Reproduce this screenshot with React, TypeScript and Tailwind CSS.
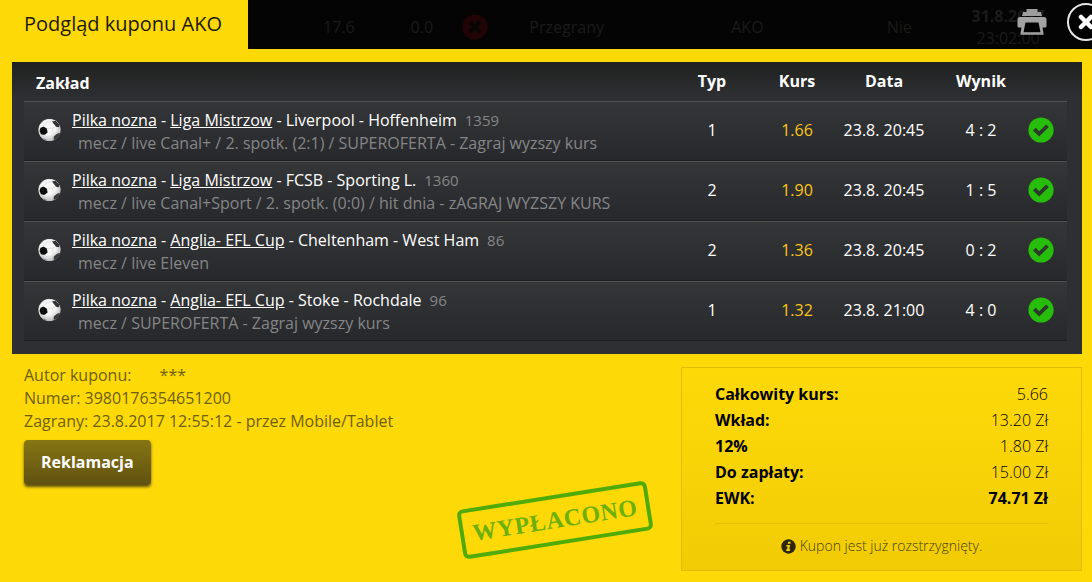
import { useId } from "react";

type Bet = {
  sport: string;
  league: string;
  match: string;
  code: string;
  note: string;
  pick: string;
  odds: string;
  date: string;
  score: string;
};

const BETS: Bet[] = [
  {
    sport: "Pilka nozna",
    league: "Liga Mistrzow",
    match: "Liverpool - Hoffenheim",
    code: "1359",
    note: "mecz / live Canal+ / 2. spotk. (2:1) / SUPEROFERTA - Zagraj wyzszy kurs",
    pick: "1",
    odds: "1.66",
    date: "23.8. 20:45",
    score: "4 : 2",
  },
  {
    sport: "Pilka nozna",
    league: "Liga Mistrzow",
    match: "FCSB - Sporting L.",
    code: "1360",
    note: "mecz / live Canal+Sport / 2. spotk. (0:0) / hit dnia - zAGRAJ WYZSZY KURS",
    pick: "2",
    odds: "1.90",
    date: "23.8. 20:45",
    score: "1 : 5",
  },
  {
    sport: "Pilka nozna",
    league: "Anglia- EFL Cup",
    match: "Cheltenham - West Ham",
    code: "86",
    note: "mecz / live Eleven",
    pick: "2",
    odds: "1.36",
    date: "23.8. 20:45",
    score: "0 : 2",
  },
  {
    sport: "Pilka nozna",
    league: "Anglia- EFL Cup",
    match: "Stoke - Rochdale",
    code: "96",
    note: "mecz / SUPEROFERTA - Zagraj wyzszy kurs",
    pick: "1",
    odds: "1.32",
    date: "23.8. 21:00",
    score: "4 : 0",
  },
];

const SUMMARY = [
  { label: "Całkowity kurs:", value: "5.66" },
  { label: "Wkład:", value: "13.20 Zł" },
  { label: "12%", value: "1.80 Zł" },
  { label: "Do zapłaty:", value: "15.00 Zł" },
  { label: "EWK:", value: "74.71 Zł", strong: true },
];

function FootballIcon() {
  const id = useId();
  return (
    <svg viewBox="0 0 24 24" className="ml-[13px] h-6 w-6" aria-hidden="true">
      <defs>
        <radialGradient id={id} cx="45%" cy="40%" r="60%">
          <stop offset="0.5" stopColor="#f7f7f7" />
          <stop offset="1" stopColor="#b9b9b9" />
        </radialGradient>
        <clipPath id={`${id}-c`}>
          <circle cx="12.5" cy="12" r="11.3" />
        </clipPath>
      </defs>
      <g clipPath={`url(#${id}-c)`}>
        <circle cx="12.5" cy="12" r="11.3" fill={`url(#${id})`} />
        <path d="M3.4 10 6.400 8.600 9.800 10.600 10.600 14.400 7.400 17 4 16.200 2.600 13z" fill="#0c0c0c" />
        <path d="M15 3.600 18.400 2.800 22.400 6.400 22 9.200 19 8.800z" fill="#333" />
        <path d="M16.600 18.600 20.400 15.600 24 15 22 20 16.800 22z" fill="#3a3a3a" />
        <path d="M0 7 4 2.400 6.400 2 3.200 6z" fill="#6a6a6a" />
        <path d="M6.400 20.400 9.800 21.800 10 24 5 22.600z" fill="#888" />
        <path
          d="M9.800 10.600 15.400 10 19 8.800M15.400 10l1.200 8.600M7.400 17l3.200 3 6-1.400M6.400 8.600 8.800 4.800l6.200-1.200"
          stroke="#dcdcdc"
          strokeWidth="0.7"
          fill="none"
        />
      </g>
    </svg>
  );
}

function WonIcon() {
  return (
    <svg viewBox="0 0 26 26" className="mx-auto h-[26px] w-[26px]" role="img" aria-label="Wygrany">
      <circle cx="13" cy="13" r="12.6" fill="#26bd0b" />
      <path d="M5 13.4 7.700 10.800 11.200 14.200 18.200 7.400 20.800 10 11.200 19.400z" fill="#2d382c" />
    </svg>
  );
}

function LostIcon() {
  return (
    <svg viewBox="0 0 26 26" className="h-[26px] w-[26px]" aria-hidden="true">
      <circle cx="13" cy="13" r="12.6" fill="#210405" />
      <path d="M8 8l10 10M18 8 8 18" stroke="#090505" strokeWidth="4" />
    </svg>
  );
}

function PrinterIcon() {
  return (
    <svg viewBox="0 0 30 26" className="h-[26px] w-[30px]" aria-hidden="true">
      <path d="M9.500 0h11v3H24l1 4H5l1-4h3.500z" fill="#9c9c9c" />
      <path
        fillRule="evenodd"
        fill="#a3a3a3"
        d="M3 8h24q2.500 0 2.500 2.500V17q0 1.500-1.500 1.500h-2.500l1.200 7.200H3.300l1.200-7.200H2Q.5 18.500.5 17v-6.500Q.5 8 3 8zM8.500 13.500l-2 9.700h17l-2-9.700z"
      />
    </svg>
  );
}

function CloseIcon() {
  return (
    <svg viewBox="0 0 40 40" className="h-10 w-10" aria-hidden="true">
      <circle cx="20" cy="20" r="18" fill="#000" stroke="#e6e6e6" strokeWidth="2" />
      <path d="M15 15l10 10M25 15 15 25" stroke="#fff" strokeWidth="4.500" strokeLinecap="round" />
    </svg>
  );
}

function InfoIcon() {
  return (
    <svg viewBox="0 0 16 16" className="h-[15px] w-[15px]" aria-hidden="true">
      <circle cx="8" cy="8" r="7.700" fill="#2b260c" />
      <path
        d="M7.600 2.800h2.600v2.200H7.200zM5.800 6.400h4L8.800 11h1l-.3 1.700H5.400L5.700 11h.8l.6-2.900H5.500z"
        fill="#f4d008"
      />
    </svg>
  );
}

// Row of the coupon list, dimmed behind the open preview
function DimmedRow() {
  return (
    <div
      aria-hidden="true"
      className="grid h-full grid-cols-[86fr_80fr_26px_158fr_204fr_100fr_118fr] items-center pt-[5px] pr-[25px] pl-12 text-center leading-[22px] text-[#1b1b1b]"
    >
      <span>17.6</span>
      <span>0.0</span>
      <LostIcon />
      <span>Przegrany</span>
      <span>AKO</span>
      <span>Nie</span>
      <p>
        <b>31.8.2017</b>
        <br />
        23:02:00
      </p>
    </div>
  );
}

function BetsTable() {
  return (
    <div className="mr-[10px] ml-3 bg-[#2e2f32] bg-linear-to-b from-[#202221] to-[#2e2f32] to-[36px] pr-[15px] pb-[13px] pl-3 text-white">
      <table className="w-full table-fixed border-separate border-spacing-0">
        <colgroup>
          <col className="w-12" />
          <col />
          <col className="w-[122px]" />
          <col className="w-[48px]" />
          <col className="w-[126px]" />
          <col className="w-[68px]" />
          <col className="w-[52px]" />
        </colgroup>
        <thead>
          <tr className="h-[39px] leading-[22px] *:p-0 *:pb-[2px] *:font-bold">
            <th colSpan={2} className="text-left">
              <span className="block pt-1 pl-3">Zakład</span>
            </th>
            <th>Typ</th>
            <th>Kurs</th>
            <th>Data</th>
            <th>Wynik</th>
            <th></th>
          </tr>
        </thead>
        <tbody>
          {BETS.map((b) => (
            <tr
              key={b.code}
              className="h-[60px] bg-linear-to-b from-[#353638] to-[#27282b] text-center *:border-t *:border-b *:border-t-[#505153] *:border-b-[#1d1e20] *:p-0 *:pb-[2px]"
            >
              <td>
                <FootballIcon />
              </td>
              <td className="text-left leading-[23px] whitespace-nowrap">
                <div className="pt-[3px]">
                  <a href="#" className="underline">
                    {b.sport}
                  </a>{" "}
                  -{" "}
                  <a href="#" className="underline">
                    {b.league}
                  </a>{" "}
                  - {b.match}
                  <span className="ml-2 text-[15px] text-[#858687]">{b.code}</span>
                </div>
                <p className="pl-[6px] text-[#858687]">{b.note}</p>
              </td>
              <td>{b.pick}</td>
              <td className="text-[#fcc419]">{b.odds}</td>
              <td>{b.date}</td>
              <td>{b.score}</td>
              <td>
                <WonIcon />
              </td>
            </tr>
          ))}
        </tbody>
      </table>
    </div>
  );
}

function SummaryBox() {
  return (
    <section className="mt-[13px] w-[401px] shrink-0 border border-[#dfbd04] bg-linear-to-b from-[#fed908] to-[#f1cc05] px-[33px] pt-[13px] pb-[13px]">
      <dl>
        {SUMMARY.map((s) => (
          <div key={s.label} className="flex justify-between leading-[26px] text-black">
            <dt className="font-bold">{s.label}</dt>
            <dd className={s.strong ? "font-bold" : "font-light"}>{s.value}</dd>
          </div>
        ))}
      </dl>
      <p className="mt-3 flex items-center justify-center gap-1 border-t border-[#e3c004] pt-[11px] text-sm leading-[22px] font-light text-[#4a4108]">
        <InfoIcon />
        Kupon jest już rozstrzygnięty.
      </p>
    </section>
  );
}

export default function App() {
  return (
    <main className="min-h-screen overflow-hidden bg-[#fed908] pb-[11px] font-['Open_Sans','Noto_Sans',sans-serif] text-base">
      {/* Title tab + page behind */}
      <header className="flex h-[49px]">
        <h1 className="w-[248px] shrink-0 pl-6 text-xl leading-[48px] font-normal text-[#1c1801]">
          Podgląd kuponu AKO
        </h1>
        <div className="relative flex-1 overflow-hidden bg-[#040404]">
          <DimmedRow />
          <button aria-label="Drukuj" className="absolute top-[9px] right-[45px]">
            <PrinterIcon />
          </button>
          <button aria-label="Zamknij" className="absolute top-[2px] -right-[14px]">
            <CloseIcon />
          </button>
        </div>
      </header>

      <div className="pt-[13px]">
        <BetsTable />
      </div>

      <div className="flex pr-[10px] pl-6">
        <div className="flex-1 pt-[10px] leading-[23px] text-[#6f6008]">
          <p>
            Autor kuponu: <span className="ml-6">***</span>
          </p>
          <p>Numer: 3980176354651200</p>
          <p>Zagrany: 23.8.2017 12:55:12 - przez Mobile/Tablet</p>
          <button className="mt-[7px] h-[45px] rounded bg-linear-to-b from-[#877613] to-[#5f5111] px-[17px] font-bold text-white shadow-[0_2px_3px_#5f5111]">
            Reklamacja
          </button>
        </div>

        {/* Paid-out stamp */}
        <div className="mr-[30px] mb-[26px] flex h-[50px] w-[192px] -rotate-9 items-center justify-center self-end rounded-md border-4 border-[#4fab07] font-['Liberation_Serif',serif] text-2xl font-bold tracking-wide text-[#6db008]">
          WYPŁACONO
        </div>

        <SummaryBox />
      </div>
    </main>
  );
}
